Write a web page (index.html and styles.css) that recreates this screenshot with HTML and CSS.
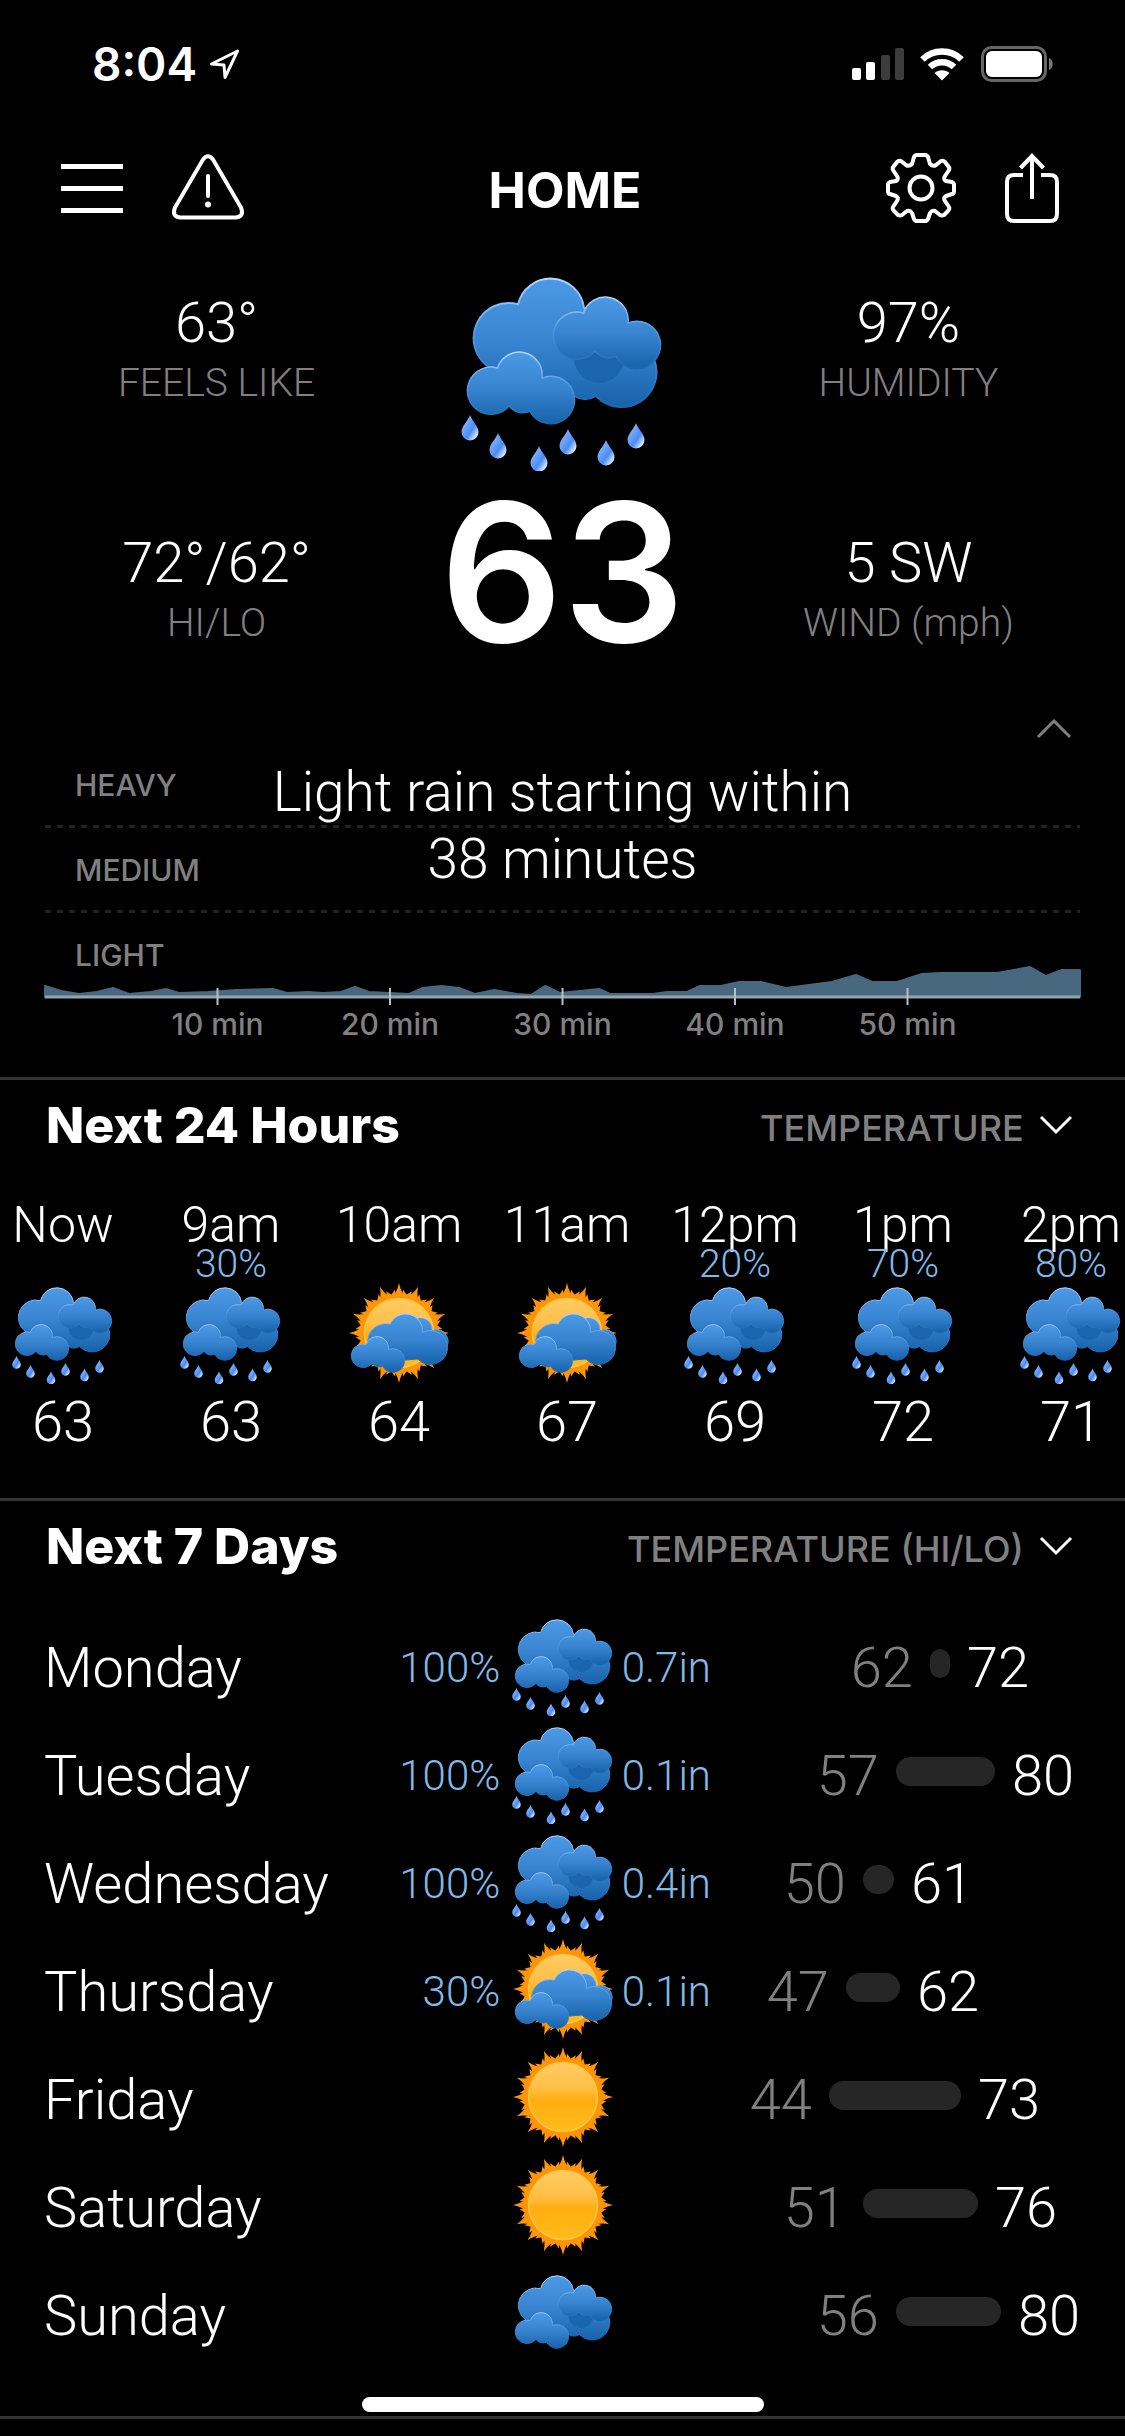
FILE: index.html
```html
<!DOCTYPE html>
<html lang="en">
<head>
<meta charset="utf-8">
<meta name="viewport" content="width=device-width">
<title>Weather</title>
<link rel="stylesheet" href="styles.css">
</head>
<body>

<svg class="defs" width="0" height="0" aria-hidden="true">
  <defs>
    <linearGradient id="cloud-fill" x1="0" y1="0" x2="0" y2="1">
      <stop offset="0" stop-color="#4c99e6"/>
      <stop offset="0.5" stop-color="#3884d0"/>
      <stop offset="1" stop-color="#1762aa"/>
    </linearGradient>
    <linearGradient id="cloud-edge" x1="0" y1="0" x2="0" y2="1">
      <stop offset="0" stop-color="#b5d8fd"/>
      <stop offset="0.45" stop-color="#4f9ae2"/>
      <stop offset="1" stop-color="#1c68b0"/>
    </linearGradient>
    <linearGradient id="sun-fill" x1="0" y1="0" x2="0" y2="1">
      <stop offset="0" stop-color="#ffcb63"/>
      <stop offset="0.35" stop-color="#ffc04a"/>
      <stop offset="0.55" stop-color="#ffae10"/>
      <stop offset="1" stop-color="#ffbb1c"/>
    </linearGradient>
    <linearGradient id="drop-fill" x1="0" y1="0" x2="1" y2="1">
      <stop offset="0.2" stop-color="#86b4fb"/>
      <stop offset="0.6" stop-color="#4a8cf5"/>
      <stop offset="0.85" stop-color="#d5e5ff"/>
    </linearGradient>

    <path id="puff" d="M36.5 101A22.9 22.9 0 0 1 81 111A23.7 23.7 0 1 1 69 144.3A18 18 0 0 1 48 139A23.6 23.6 0 1 1 36.5 101Z" fill="url(#cloud-fill)" stroke="url(#cloud-edge)" stroke-width="1.5"/>
    <path id="drop" d="M0 0C2 6 8.500 11 8.500 17A8.500 8.500 0 0 1-8.500 17C-8.500 11-2 6 0 0Z" fill="url(#drop-fill)"/>
    <g id="ray">
      <path d="M-16-70Q-4-80 0-100Q4-80 16-70Z"/>
      <path d="M5-70Q8-80 8-87Q13-80 20-70Z"/>
      <path d="M-5-70Q-8-80-8-87Q-13-80-20-70Z"/>
    </g>
    <g id="rays">
      <use href="#ray"/>
      <use href="#ray" transform="rotate(22.5)"/>
      <use href="#ray" transform="rotate(45)"/>
      <use href="#ray" transform="rotate(67.5)"/>
    </g>

    <g id="clouds">
      <path d="M57 37.300A33.600 33.600 0 0 1 123 41L170 60L193 92A35 35 0 0 1 135 129A22 22 0 0 1 113 129L70 130L28 100A35 35 0 0 1 57 37.300Z" fill="url(#cloud-fill)" stroke="url(#cloud-edge)" stroke-width="2"/>
      <circle cx="138" cy="91" r="25" fill="#1b65ae"/>
      <use href="#puff" x="86" y="-55"/>
      <use href="#puff"/>
    </g>

    <symbol id="rain" viewBox="0 0 204 204">
      <use href="#clouds"/>
      <use href="#drop" x="9" y="148"/>
      <use href="#drop" x="37" y="166"/>
      <use href="#drop" x="78" y="179"/>
      <use href="#drop" x="107" y="162"/>
      <use href="#drop" x="145" y="173"/>
      <use href="#drop" x="175" y="156"/>
    </symbol>
    <symbol id="cloudy" viewBox="0 0 204 204">
      <use href="#clouds" y="16"/>
    </symbol>
    <symbol id="sunny" viewBox="0 0 204 204">
      <g transform="translate(102 102)" fill="#fd9409">
        <use href="#rays"/>
        <use href="#rays" transform="rotate(90)"/>
        <use href="#rays" transform="rotate(180)"/>
        <use href="#rays" transform="rotate(270)"/>
        <circle r="74"/>
        <circle r="69" fill="url(#sun-fill)" stroke="#ffc640" stroke-width="3"/>
      </g>
    </symbol>
    <symbol id="partly" viewBox="0 0 204 204">
      <use href="#sunny" width="204" height="204"/>
      <use href="#puff" x="87" y="-14"/>
      <path d="M84 84A34 34 0 0 1 149 101A34 34 0 1 1 140 154L90 158L40 125A36 36 0 0 1 84 84Z" fill="url(#cloud-fill)" stroke="url(#cloud-edge)" stroke-width="2"/>
      <use href="#puff" y="24"/>
    </symbol>
    <symbol id="chevron-down" viewBox="0 0 34 20">
      <path d="M2 2L17 17L32 2" fill="none" stroke="currentColor" stroke-width="3"/>
    </symbol>
    <symbol id="chevron-up" viewBox="0 0 34 20">
      <path d="M1 18L17 2L33 18" fill="none" stroke="currentColor" stroke-width="3"/>
    </symbol>
  </defs>
</svg>

<div class="status">
  <span class="clock">8:04</span>
  <svg class="location" width="32" height="32" viewBox="0 0 32 32"><path d="M28.500 3L2.500 16L15 17L16 29.500Z" fill="none" stroke="#fff" stroke-width="3" stroke-linejoin="round"/></svg>
  <svg class="signal" width="53" height="34" viewBox="0 0 53 34">
    <rect x="0" y="21" width="9" height="12" rx="2" fill="#fff"/>
    <rect x="14" y="15" width="9" height="18" rx="2" fill="#fff"/>
    <rect x="29" y="8" width="9" height="25" rx="2" fill="#3c3c3c"/>
    <rect x="43" y="1" width="9" height="32" rx="2" fill="#3c3c3c"/>
  </svg>
  <svg class="wifi" width="46" height="34" viewBox="0 0 46 34">
    <path d="M3.500 12.500C14 1.800 32 1.800 42.500 12.500M11 20C17.500 13.700 28.500 13.700 35 20" fill="none" stroke="#fff" stroke-width="6.500"/>
    <path d="M23 33.500L15.500 26C19.500 22.200 26.500 22.200 30.500 26Z" fill="#fff"/>
  </svg>
  <svg class="battery" width="74" height="36" viewBox="0 0 74 36">
    <rect x="1.500" y="1.500" width="63" height="33" rx="9" fill="none" stroke="#666" stroke-width="3"/>
    <rect x="5" y="5" width="56" height="26" rx="6" fill="#fff"/>
    <path d="M68 12C73 14 73 22 68 24Z" fill="#777"/>
  </svg>
</div>

<header class="toolbar">
  <button type="button" aria-label="Menu">
    <svg width="62" height="70" viewBox="0 0 62 70"><path d="M0 13.500H62M0 35.500H62M0 57.500H62" stroke="#fff" stroke-width="5"/></svg>
  </button>
  <button type="button" aria-label="Alerts">
    <svg width="72" height="70" viewBox="0 0 72 70">
      <path d="M31 6.500Q36 0 41 6.500L69 54.500Q72.500 63.500 64 64.500H8Q-.5 63.500 3 54.500Z" fill="none" stroke="#fff" stroke-width="4"/>
      <path d="M36 23V43" stroke="#fff" stroke-width="4" stroke-linecap="round"/>
      <circle cx="36" cy="51.500" r="3" fill="#fff"/>
    </svg>
  </button>
  <h1>HOME</h1>
  <button type="button" aria-label="Settings">
    <svg width="70" height="70" viewBox="-35 -35 70 70" fill="none" stroke="#fff" stroke-width="4" stroke-linejoin="round">
      <path d="M-7-31Q-6-33-4-33H4Q6-33 7-31L9-24Q12-21 15-23L20-27Q22-28 24-26L27-22Q29-20 28-18L24-12Q22-9 25-7L31-6Q33-5 33-3V3Q33 6 31 6L25 8Q22 10 24 13L28 19Q29 21 27 23L23 27Q21 28 19 27L14 23Q11 22 9 25L7 31Q6 33 4 33H-4Q-6 33-7 31L-9 25Q-11 22-14 23L-19 27Q-21 28-23 27L-27 23Q-29 21-28 19L-24 13Q-22 10-25 8L-31 6Q-33 6-33 3V-3Q-33-5-31-6L-25-7Q-22-9-24-12L-28-18Q-29-20-27-22L-24-26Q-22-28-20-27L-15-23Q-12-21-9-24Z"/>
      <circle r="11.500"/>
    </svg>
  </button>
  <button type="button" aria-label="Share">
    <svg width="54" height="70" viewBox="0 0 54 70" fill="none" stroke="#fff" stroke-width="4">
      <path d="M18 22H9Q2 22 2 29V61Q2 68 9 68H45Q52 68 52 61V29Q52 22 45 22H36"/>
      <path d="M27 46V3M15.500 15L27 3L38.500 15"/>
    </svg>
  </button>
</header>

<section class="current">
  <dl class="metrics">
    <div><dd>63°</dd><dt>FEELS LIKE</dt></div>
    <div><dd>72°/62°</dd><dt>HI/LO</dt></div>
  </dl>
  <div class="now">
    <svg class="icon-large" role="img" aria-label="Rain"><use href="#rain"/></svg>
    <div class="temp">63</div>
  </div>
  <dl class="metrics">
    <div><dd>97%</dd><dt>HUMIDITY</dt></div>
    <div><dd>5 SW</dd><dt>WIND (mph)</dt></div>
  </dl>
</section>

<section class="nowcast">
  <button type="button" class="collapse" aria-label="Collapse">
    <svg width="34" height="20"><use href="#chevron-up"/></svg>
  </button>
  <div class="chart">
    <svg class="plot" viewBox="0 0 1035 264" preserveAspectRatio="none">
      <path d="M0 85.500H1035M0 170.500H1035" stroke="#222" stroke-width="3" stroke-dasharray="6 6"/>
      <path d="M0 245L16 250L34 253L52 251L68 247L84 253L106 251L121 248L134 252L163 251L192 249L228 248L242 252L263 251L278 252L296 251L310 246L324 251L364 253L378 247L396 245L414 247L430 253L449 249L472 253L486 254L500 245L515 252L554 248L565 253L608 253L622 251L642 251L655 245L676 245L694 241L716 241L741 247L787 241L811 234L827 241L852 241L877 233L895 232L952 232L985 226L1001 235L1017 229L1035 229V256H0Z" fill="#48687f" stroke="#48687f" stroke-width="2" stroke-linejoin="round"/>
      <path d="M0 256H1035" stroke="#96a3ad" stroke-width="3"/>
      <path d="M172.500 247V264M345 247V264M517.500 247V264M690 247V264M862.500 247V264" stroke="#b4bfc7" stroke-width="2"/>
    </svg>
    <ul class="levels">
      <li>HEAVY</li>
      <li>MEDIUM</li>
      <li>LIGHT</li>
    </ul>
    <p class="summary">Light rain starting within 38 minutes</p>
  </div>
  <ol class="minutes">
    <li>10 min</li>
    <li>20 min</li>
    <li>30 min</li>
    <li>40 min</li>
    <li>50 min</li>
  </ol>
</section>

<section class="panel">
  <div class="panel-head">
    <h2>Next 24 Hours</h2>
    <label class="picker">
      <select aria-label="Hourly value"><option>TEMPERATURE</option></select>
      <svg width="34" height="20"><use href="#chevron-down"/></svg>
    </label>
  </div>
  <ol class="hours">
    <li><time>Now</time><span class="chance"></span><svg class="icon"><use href="#rain"/></svg><b>63</b></li>
    <li><time>9am</time><span class="chance">30%</span><svg class="icon"><use href="#rain"/></svg><b>63</b></li>
    <li><time>10am</time><span class="chance"></span><svg class="icon"><use href="#partly"/></svg><b>64</b></li>
    <li><time>11am</time><span class="chance"></span><svg class="icon"><use href="#partly"/></svg><b>67</b></li>
    <li><time>12pm</time><span class="chance">20%</span><svg class="icon"><use href="#rain"/></svg><b>69</b></li>
    <li><time>1pm</time><span class="chance">70%</span><svg class="icon"><use href="#rain"/></svg><b>72</b></li>
    <li><time>2pm</time><span class="chance">80%</span><svg class="icon"><use href="#rain"/></svg><b>71</b></li>
  </ol>
</section>

<section class="panel">
  <div class="panel-head">
    <h2>Next 7 Days</h2>
    <label class="picker">
      <select aria-label="Daily value"><option>TEMPERATURE (HI/LO)</option></select>
      <svg width="34" height="20"><use href="#chevron-down"/></svg>
    </label>
  </div>
  <table class="days">
    <colgroup>
      <col class="col-day">
      <col class="col-chance">
      <col class="col-icon">
      <col class="col-amount">
      <col>
    </colgroup>
    <tbody>
      <tr>
        <th scope="row">Monday</th><td class="chance">100%</td><td class="sky"><svg class="icon"><use href="#rain"/></svg></td><td class="amount">0.7in</td>
        <td><div class="range" style="padding-left: 101px"><span class="lo">62</span><i style="width: 20px"></i><span>72</span></div></td>
      </tr>
      <tr>
        <th scope="row">Tuesday</th><td class="chance">100%</td><td class="sky"><svg class="icon"><use href="#rain"/></svg></td><td class="amount">0.1in</td>
        <td><div class="range" style="padding-left: 67px"><span class="lo">57</span><i style="width: 99px"></i><span>80</span></div></td>
      </tr>
      <tr>
        <th scope="row">Wednesday</th><td class="chance">100%</td><td class="sky"><svg class="icon"><use href="#rain"/></svg></td><td class="amount">0.4in</td>
        <td><div class="range" style="padding-left: 34px"><span class="lo">50</span><i style="width: 31px"></i><span>61</span></div></td>
      </tr>
      <tr>
        <th scope="row">Thursday</th><td class="chance">30%</td><td class="sky"><svg class="icon"><use href="#partly"/></svg></td><td class="amount">0.1in</td>
        <td><div class="range" style="padding-left: 17px"><span class="lo">47</span><i style="width: 54px"></i><span>62</span></div></td>
      </tr>
      <tr>
        <th scope="row">Friday</th><td class="chance"></td><td class="sky"><svg class="icon"><use href="#sunny"/></svg></td><td class="amount"></td>
        <td><div class="range" style="padding-left: 0"><span class="lo">44</span><i style="width: 132px"></i><span>73</span></div></td>
      </tr>
      <tr>
        <th scope="row">Saturday</th><td class="chance"></td><td class="sky"><svg class="icon"><use href="#sunny"/></svg></td><td class="amount"></td>
        <td><div class="range" style="padding-left: 34px"><span class="lo">51</span><i style="width: 115px"></i><span>76</span></div></td>
      </tr>
      <tr>
        <th scope="row">Sunday</th><td class="chance"></td><td class="sky"><svg class="icon"><use href="#cloudy"/></svg></td><td class="amount"></td>
        <td><div class="range" style="padding-left: 67px"><span class="lo">56</span><i style="width: 105px"></i><span>80</span></div></td>
      </tr>
    </tbody>
  </table>
</section>

<footer class="next"></footer>
<div class="home-bar"></div>

</body>
</html>
```

FILE: styles.css
```css
* { box-sizing: border-box; }
body { margin: 0; background: #000; color: #fff; font: 300 56px/60px Roboto, "Liberation Sans", sans-serif; overflow-x: hidden; }
h1, h2, p, dl, dd, ol, ul { margin: 0; padding: 0; list-style: none; }
h1, h2 { font: 800 50px/90px Inter, "Liberation Sans", sans-serif; }
svg { display: block; flex: none; overflow: visible; }
button { display: block; margin: 0; padding: 0; border: 0; background: none; color: inherit; }
.defs { position: absolute; }

.status { display: flex; align-items: center; height: 128px; padding: 0 72px 0 92px; }
.clock { font: 600 46px/128px Inter, "Liberation Sans", sans-serif; }
.location { margin-left: 12px; }
.signal { margin-left: auto; }
.wifi { margin: 0 16px 0 14px; }
.battery { margin-right: -2px; }

.toolbar { display: grid; grid-template-columns: 62px 72px 1fr 70px 54px; column-gap: 49px; align-items: center; height: 120px; padding: 0 66px 0 61px; }
.toolbar h1 { padding-top: 4px; font-weight: 700; text-align: center; }

.current { display: grid; grid-template-columns: 1fr 23% 1fr; padding-top: 19px; text-align: center; }
.metrics { display: grid; row-gap: 120px; align-content: start; padding-top: 26px; }
.metrics > div { display: flex; flex-direction: column; }
.metrics dt { color: #808080; font-size: 39px; }
.now { display: flex; flex-direction: column; align-items: center; }
.icon-large { width: 204px; height: 204px; }
.temp { font: 600 192px/202px Inter, "Liberation Sans", sans-serif; }

.nowcast { padding: 46px 45px 26px; }
.collapse { display: flex; margin-left: auto; padding-right: 9px; height: 22px; color: #808080; }
.chart { position: relative; }
.plot { position: absolute; left: 0; top: 0; width: 100%; height: 264px; }
.levels { color: #808080; font: 500 30px/85px Inter, "Liberation Sans", sans-serif; padding: 2px 0 0 30px; }
.summary { position: absolute; left: 20%; right: 20%; top: 18px; font-size: 55px; line-height: 67px; text-align: center; }
.minutes { display: grid; grid-template-columns: repeat(5, 1fr); margin-top: -1px; padding: 0 calc(100% / 12); color: #808080; font: 500 30px/54px Inter, "Liberation Sans", sans-serif; text-align: center; }

.panel { border-top: 3px solid #333; }
.panel-head { display: flex; justify-content: space-between; align-items: center; height: 90px; padding: 0 52px 0 46px; }
.picker { display: flex; align-items: center; gap: 15px; }
.picker select { appearance: none; margin: 0; padding: 6px 0 0; border: 0; background: none; color: #808080; font: 500 36px/60px Inter, "Liberation Sans", sans-serif; }

.hours { display: grid; grid-template-columns: repeat(7, 168px); margin-left: -21px; padding: 30px 0 48px; }
.hours li { display: flex; flex-direction: column; align-items: center; }
.hours time { font-size: 50px; line-height: 50px; }
.hours b { font-weight: 300; line-height: 56px; }
.chance, .amount { color: #80b9e8; }
.hours .chance { height: 28px; font-size: 39px; line-height: 28px; }
.icon { width: 102px; height: 102px; }
.hours .icon { margin: 4px 0 10px; }

.days { width: 100%; margin: 20px 0 49px; table-layout: fixed; border-collapse: collapse; }
.col-day { width: 30%; }
.col-chance { width: 15%; }
.col-icon { width: 10%; }
.col-amount { width: 12%; }
.days tr { height: 108px; }
.days th, .days td { padding: 6px 0 0; font-weight: 300; white-space: nowrap; }
.days th { padding-left: 44px; text-align: left; }
.days .sky { padding: 0; }
.days .chance { padding-right: 6px; font-size: 42px; text-align: right; }
.days .amount { padding-left: 3px; font-size: 42px; }
.days .icon { margin: 0 auto; }
.range { display: flex; align-items: center; gap: 17px; margin-left: -4px; }
.range .lo { color: #808080; }
.range i { height: 29px; margin-bottom: 10px; border-radius: 15px; background: #262626; }

.next { height: 19px; border-top: 3px solid #333; }
.home-bar { position: fixed; left: 0; right: 0; bottom: 24px; width: 402px; height: 15px; margin: 0 auto; border-radius: 8px; background: #fff; }
```
